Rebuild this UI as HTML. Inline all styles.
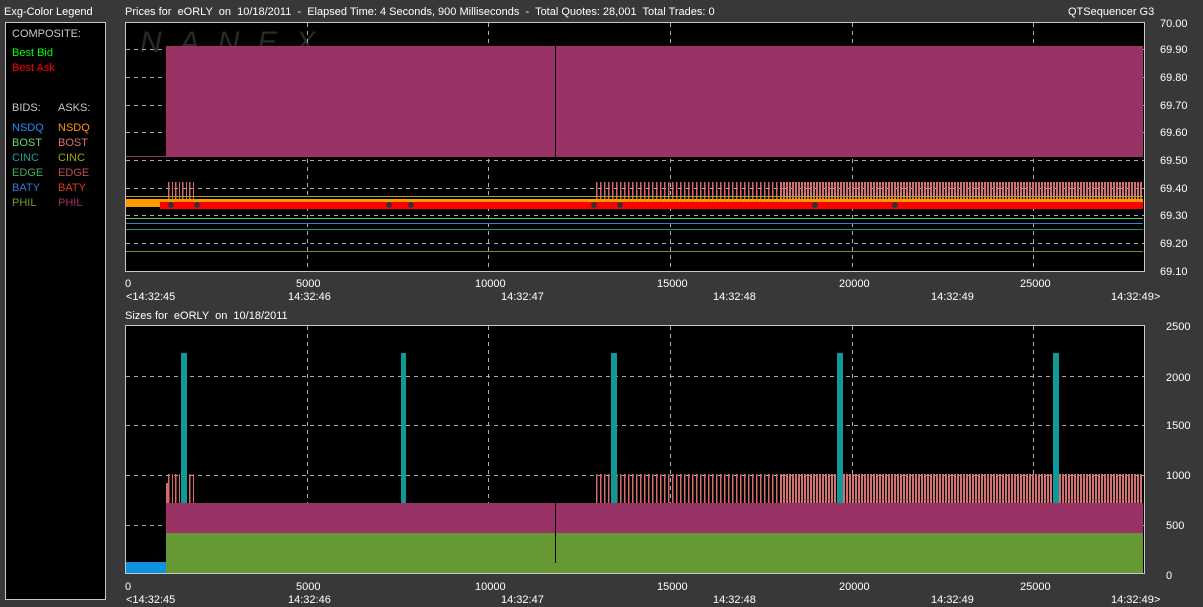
<!DOCTYPE html>
<html><head><meta charset="utf-8"><style>
body{margin:0;background:#383838;width:1203px;height:607px;overflow:hidden;font-family:"Liberation Sans",sans-serif;}
svg{position:absolute;left:0;top:0}
text{font-family:"Liberation Sans",sans-serif;font-size:11px;fill:#fff;white-space:pre}
</style></head><body>
<svg width="1203" height="607" viewBox="0 0 1203 607" xml:space="preserve">
<defs>
<pattern id="pk" width="7" height="10" patternUnits="userSpaceOnUse"><rect x="0" y="0" width="1.5" height="10" fill="#d46a6a"/><rect x="4" y="0" width="1" height="10" fill="#d46a6a"/></pattern>
<pattern id="pk2" width="4" height="10" patternUnits="userSpaceOnUse"><rect x="0" y="0" width="1.5" height="10" fill="#d46a6a"/></pattern>
<pattern id="pk3" width="3" height="10" patternUnits="userSpaceOnUse"><rect x="0" y="0" width="2" height="10" fill="#d47070"/></pattern>
</defs>
<rect width="1203" height="607" fill="#383838"/>
<text x="4" y="15">Exg-Color Legend</text>
<text x="125" y="15">Prices for  eORLY  on  10/18/2011  -  Elapsed Time: 4 Seconds, 900 Milliseconds  -  Total Quotes: 28,001  Total Trades: 0</text>
<text x="1068" y="15">QTSequencer G3</text>
<rect x="5.5" y="22.5" width="100" height="577" fill="#000" stroke="#c8c8c8"/>
<text x="12" y="37" style="fill:#c8c8c8">COMPOSITE:</text>
<text x="12" y="56" style="fill:#00ff00">Best Bid</text>
<text x="12" y="71" style="fill:#ff0000">Best Ask</text>
<text x="12" y="111" style="fill:#c8c8c8">BIDS:</text><text x="58" y="111" style="fill:#c8c8c8">ASKS:</text>
<text x="12" y="131" style="fill:#1e90ff">NSDQ</text><text x="58" y="131" style="fill:#ff9900">NSDQ</text>
<text x="12" y="146" style="fill:#66dd66">BOST</text><text x="58" y="146" style="fill:#e07070">BOST</text>
<text x="12" y="161" style="fill:#1aa0a0">CINC</text><text x="58" y="161" style="fill:#aaaa00">CINC</text>
<text x="12" y="176" style="fill:#40b060">EDGE</text><text x="58" y="176" style="fill:#c05050">EDGE</text>
<text x="12" y="191" style="fill:#3a7ad0">BATY</text><text x="58" y="191" style="fill:#e03c10">BATY</text>
<text x="12" y="206" style="fill:#70a030">PHIL</text><text x="58" y="206" style="fill:#a03070">PHIL</text>
<rect x="125.5" y="22.5" width="1019" height="249" fill="#000" stroke="#c8c8c8"/>
<text x="140" y="52" style="font-size:30px;fill:#2a2a2a;font-style:italic;letter-spacing:18px">NANEX</text>
<g stroke="#aaa" stroke-dasharray="4,4" stroke-width="1">
<line x1="126" y1="49.5" x2="1144" y2="49.5"/><line x1="126" y1="77.5" x2="1144" y2="77.5"/><line x1="126" y1="105.5" x2="1144" y2="105.5"/><line x1="126" y1="132.5" x2="1144" y2="132.5"/><line x1="126" y1="160.5" x2="1144" y2="160.5"/><line x1="126" y1="188.5" x2="1144" y2="188.5"/><line x1="126" y1="215.5" x2="1144" y2="215.5"/><line x1="126" y1="243.5" x2="1144" y2="243.5"/>
<line x1="307.5" y1="23" x2="307.5" y2="271"/><line x1="488.5" y1="23" x2="488.5" y2="271"/><line x1="670.5" y1="23" x2="670.5" y2="271"/><line x1="852.5" y1="23" x2="852.5" y2="271"/><line x1="1033.5" y1="23" x2="1033.5" y2="271"/>
</g>
<rect x="166" y="46" width="977" height="111" fill="#993366"/>
<rect x="126" y="156" width="40" height="1" fill="#993366"/>
<rect x="555" y="46" width="1" height="111" fill="#000"/>
<rect x="595" y="182" width="190" height="18" fill="url(#pk2)"/>
<rect x="780" y="182" width="363" height="18" fill="url(#pk3)"/>
<rect x="166" y="182" width="30" height="18" fill="url(#pk)"/>
<rect x="126" y="196" width="1017" height="1" fill="#aaaa00"/>
<rect x="126" y="199" width="1017" height="5" fill="#ff9900"/>
<rect x="160" y="202" width="983" height="7" fill="#ff0000"/>
<rect x="126" y="204" width="34" height="3" fill="#ff9900"/>
<rect x="126" y="218" width="1017" height="1" fill="#55cc55"/>
<rect x="126" y="223" width="1017" height="1" fill="#3a7ad0"/>
<rect x="126" y="229" width="1017" height="1" fill="#1a9090"/>
<rect x="126" y="251" width="1017" height="1" fill="#709030"/>
<g fill="#333"><circle cx="171" cy="205" r="3"/><circle cx="197" cy="205" r="3"/><circle cx="389" cy="205" r="3"/><circle cx="411" cy="205" r="3"/><circle cx="594" cy="205" r="3"/><circle cx="620" cy="205" r="3"/><circle cx="815" cy="205" r="3"/><circle cx="895" cy="205" r="3"/></g>
<g>
<text x="1160" y="27">70.00</text><text x="1160" y="53">69.90</text><text x="1160" y="81">69.80</text><text x="1160" y="109">69.70</text><text x="1160" y="136">69.60</text><text x="1160" y="164">69.50</text><text x="1160" y="192">69.40</text><text x="1160" y="219">69.30</text><text x="1160" y="247">69.20</text><text x="1160" y="275">69.10</text>
</g>
<g style="font-size:10px">
<text x="125" y="287">0</text><text x="296" y="287">5000</text><text x="475" y="287">10000</text><text x="657" y="287">15000</text><text x="839" y="287">20000</text><text x="1020" y="287">25000</text>
<text x="126" y="300">&lt;14:32:45</text><text x="288" y="300">14:32:46</text><text x="501" y="300">14:32:47</text><text x="713" y="300">14:32:48</text><text x="931" y="300">14:32:49</text><text x="1111" y="300">14:32:49&gt;</text>
</g>
<text x="125" y="319">Sizes for  eORLY  on  10/18/2011</text>
<rect x="125.5" y="325.5" width="1019" height="248" fill="#000" stroke="#c8c8c8"/>
<g stroke="#aaa" stroke-dasharray="4,4">
<line x1="126" y1="376.5" x2="1144" y2="376.5"/><line x1="126" y1="425.5" x2="1144" y2="425.5"/><line x1="126" y1="475.5" x2="1144" y2="475.5"/><line x1="126" y1="525.5" x2="1144" y2="525.5"/>
<line x1="307.5" y1="326" x2="307.5" y2="573"/><line x1="488.5" y1="326" x2="488.5" y2="573"/><line x1="670.5" y1="326" x2="670.5" y2="573"/><line x1="852.5" y1="326" x2="852.5" y2="573"/><line x1="1033.5" y1="326" x2="1033.5" y2="573"/>
</g>
<rect x="595" y="474" width="190" height="30" fill="url(#pk2)"/>
<rect x="780" y="474" width="363" height="30" fill="url(#pk3)"/>
<rect x="166" y="474" width="30" height="30" fill="url(#pk)"/>
<rect x="166" y="483" width="3" height="20" fill="#d46a6a"/>
<rect x="166" y="503" width="977" height="30" fill="#993366"/>
<rect x="166" y="533" width="977" height="40" fill="#669933"/>
<rect x="555" y="503" width="1" height="60" fill="#000"/>
<rect x="126" y="562" width="40" height="11" fill="#1090e0"/>
<g fill="#109999"><rect x="181" y="353" width="6" height="150"/><rect x="401" y="353" width="5" height="150"/><rect x="611" y="353" width="6" height="150"/><rect x="837" y="353" width="6" height="150"/><rect x="1053" y="353" width="6" height="150"/></g>
<g><text x="1166" y="330">2500</text><text x="1166" y="381">2000</text><text x="1166" y="429">1500</text><text x="1166" y="479">1000</text><text x="1166" y="529">500</text><text x="1166" y="579">0</text></g>
<g style="font-size:10px">
<text x="125" y="590">0</text><text x="296" y="590">5000</text><text x="475" y="590">10000</text><text x="657" y="590">15000</text><text x="839" y="590">20000</text><text x="1020" y="590">25000</text>
<text x="126" y="603">&lt;14:32:45</text><text x="288" y="603">14:32:46</text><text x="501" y="603">14:32:47</text><text x="713" y="603">14:32:48</text><text x="931" y="603">14:32:49</text><text x="1111" y="603">14:32:49&gt;</text>
</g>
</svg>
</body></html>
